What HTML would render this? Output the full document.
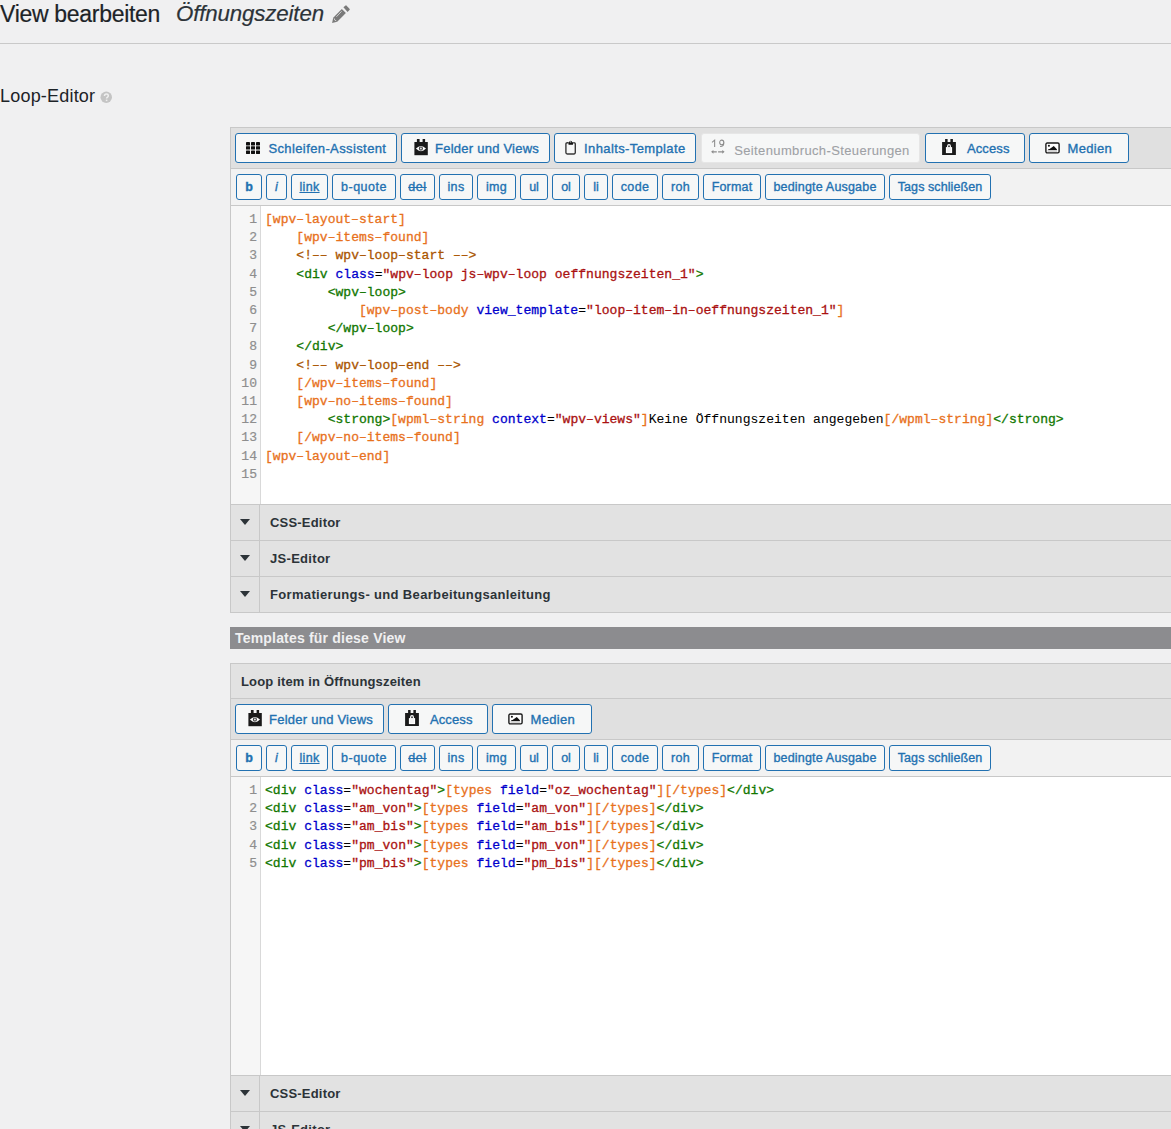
<!DOCTYPE html>
<html><head><meta charset="utf-8">
<style>
*{box-sizing:border-box;margin:0;padding:0}
html,body{width:1171px;height:1129px;overflow:hidden;background:#f0f0f1;font-family:"Liberation Sans",sans-serif;color:#1d2327}
.a{position:absolute}
.t1{left:0;top:0;font-size:23px;line-height:28px;letter-spacing:-0.3px;color:#1d2327;-webkit-text-stroke:0.2px;white-space:nowrap}
.t2{left:176px;top:0px;font-size:22.3px;line-height:28px;font-style:italic;letter-spacing:-0.15px;-webkit-text-stroke:0.2px;color:#2c3338;white-space:nowrap}
.hr{left:0;top:43px;width:1171px;height:1px;background:#c9c9c9}
.le{left:0;top:84px;font-size:18px;line-height:24px;letter-spacing:0.2px;white-space:nowrap}
.help{left:100px;top:92px;width:11px;height:11px;border-radius:50%;background:#c3c4c7;color:#fff;font-size:9px;line-height:11px;text-align:center;font-weight:bold}
.panel{left:230px;width:941px;border-left:1px solid #c8c8c8}
.hl{left:230px;width:941px;height:1px;background:#c8c8c8}
.bg{left:231px;width:940px}
.btn{position:absolute;border:1px solid #2271b1;border-radius:3px;background:#f6f7f7}
.bt1{font-size:13px;line-height:15px;white-space:nowrap;color:#2271b1;-webkit-text-stroke:0.35px}
.bt2{font-size:12.5px;line-height:15px;white-space:nowrap;color:#2271b1;text-align:center;-webkit-text-stroke:0.35px}
.dis{border-color:#e6e6e6}
.gut{left:231px;width:30px;background:#f6f6f6;border-right:1px solid #d9d9d9}
.code{font-family:"Liberation Mono",monospace;font-size:13.05px;line-height:18.2px;white-space:pre;color:#000;-webkit-text-stroke:0.05px}
.ln{left:231px;width:26px;text-align:right;color:#8e8e8e}
.o,.g,.bl,.r,.br{-webkit-text-stroke:0.3px}.ln{-webkit-text-stroke:0.2px}.o{color:#e8711c}.g{color:#170}.bl{color:#00c}.r{color:#a11}.br{color:#a50}
.sec{left:231px;width:940px;height:35px;background:#e2e2e2}
.arr{position:absolute;left:9px;top:14px;width:0;height:0;border-left:5px solid transparent;border-right:5px solid transparent;border-top:6.5px solid #2c3338}
.vsep{position:absolute;left:28px;top:0;width:1px;height:35px;background:#c8c8c8}
.stxt{position:absolute;left:39px;top:0;line-height:35px;font-size:13px;font-weight:bold;color:#2c3338;white-space:nowrap}
</style></head><body>
<div class="a t1">View bearbeiten</div>
<div class="a t2">Öffnungszeiten</div>
<svg class="a" style="left:328px;top:2px" width="26" height="26" viewBox="0 0 26 26"><path d="M15.4 5.3 L17.6 3.5 Q18 3.2 18.4 3.6 L21.7 6.9 Q22 7.3 21.7 7.7 L19.6 9.9Z" fill="#7a7a7a"/><path d="M13.8 6.9 L17.9 11.1 L9.2 19.8 L4.1 20.9 L5.2 15.7Z" fill="#7a7a7a"/><path d="M13.6 9.3 L8.4 14.8" stroke="#d6d6d6" stroke-width="0.9"/><path d="M6.2 16.4 Q6.3 18.6 8.3 18.9" stroke="#e6e6e6" stroke-width="0.8" fill="none"/></svg>
<div class="a hr"></div>
<div class="a le">Loop-Editor</div>
<svg class="a" style="left:100px;top:91px" width="13" height="13" viewBox="0 0 13 13"><circle cx="6.25" cy="6.3" r="5.75" fill="#c4c4c4"/><path d="M4.5 5.0 Q4.5 3.1 6.4 3.1 Q8.3 3.1 8.3 4.8 Q8.3 5.8 7.3 6.4 Q6.6 6.8 6.6 7.6" fill="none" stroke="#efefef" stroke-width="1.5"/><rect x="5.8" y="8.6" width="1.6" height="1.5" fill="#efefef"/></svg>

<!-- PANEL 1 -->
<div class="a panel" style="top:127px;height:486px"></div>
<div class="a hl" style="top:127px"></div>
<div class="a bg" style="top:128px;height:40px;background:#e0e0e0"></div>
<div class="a hl" style="top:168px"></div>
<div class="a bg" style="top:169px;height:36px;background:#f2f2f2"></div>
<div class="a hl" style="top:205px"></div>
<div class="a bg" style="top:206px;height:298px;background:#fff"></div>
<div class="a gut" style="top:206px;height:298px"></div>
<div class="a hl" style="top:504px"></div>

<div class="btn" style="left:235px;top:133px;width:162px;height:30px"></div><svg class="a" style="left:246px;top:142px" width="14" height="12" viewBox="0 0 14 12" fill="#111"><rect x="0" y="0" width="4" height="3.4" rx="0.4"/><rect x="0" y="4.2" width="4" height="3.4" rx="0.4"/><rect x="0" y="8.6" width="4" height="3.4" rx="0.4"/><rect x="5" y="0" width="4" height="3.4" rx="0.4"/><rect x="5" y="4.2" width="4" height="3.4" rx="0.4"/><rect x="5" y="8.6" width="4" height="3.4" rx="0.4"/><rect x="10" y="0" width="4" height="3.4" rx="0.4"/><rect x="10" y="4.2" width="4" height="3.4" rx="0.4"/><rect x="10" y="8.6" width="4" height="3.4" rx="0.4"/></svg><div class="a bt1" style="left:268.4px;top:141px;letter-spacing:0.391px;color:#2271b1">Schleifen-Assistent</div><div class="btn" style="left:401px;top:133px;width:149px;height:30px"></div><svg class="a" style="left:414px;top:139px" width="14" height="17" viewBox="0 0 14 17"><rect x="2.9" y="0" width="2.7" height="4" fill="#1a1a1a"/><rect x="8.6" y="0" width="2.5" height="4" fill="#1a1a1a"/><rect x="0.4" y="3" width="13.4" height="13.2" fill="#1a1a1a"/><path d="M1.9 9.6 Q6.95 4.3 12 9.6 Q6.95 14.9 1.9 9.6Z" fill="#fff"/><circle cx="6.9" cy="9.6" r="1.55" fill="#ddd" stroke="#444" stroke-width="1.1"/></svg><div class="a bt1" style="left:435.1px;top:141px;letter-spacing:0.236px;color:#2271b1">Felder und Views</div><div class="btn" style="left:554px;top:133px;width:142px;height:30px"></div><svg class="a" style="left:564px;top:140px" width="14" height="16" viewBox="0 0 14 16"><path d="M4.2 2.7 H3.3 A1.4 1.4 0 0 0 1.9 4.1 V12.6 A1.4 1.4 0 0 0 3.3 14 H9.9 A1.4 1.4 0 0 0 11.3 12.6 V4.1 A1.4 1.4 0 0 0 9.9 2.7 H9.3" fill="none" stroke="#3a3a3a" stroke-width="1.4"/><path d="M4.2 2.3 H5.2 A1.5 1.5 0 0 1 8.2 2.3 H9.3 L8.9 4.7 H4.6Z" fill="#111"/><circle cx="6.7" cy="1.9" r="0.6" fill="#f6f7f7"/></svg><div class="a bt1" style="left:584.1px;top:141px;letter-spacing:0.382px;color:#2271b1">Inhalts-Template</div><div class="btn dis" style="left:701px;top:133px;width:219px;height:30px"></div><svg class="a" style="left:711px;top:138.5px" width="15" height="17" viewBox="0 0 15 17"><path d="M3.65 7.9 V1.2 L1 3.3" fill="none" stroke="#8c8c8c" stroke-width="1.05"/><ellipse cx="10.75" cy="3.4" rx="2.05" ry="2.3" fill="none" stroke="#8c8c8c" stroke-width="1.05"/><path d="M12.8 3.4 Q12.9 7.6 9.1 7.5" fill="none" stroke="#8c8c8c" stroke-width="1.05"/><path d="M0.1 12.8 L2.4 10.9 V12.2 H5.8 V13.4 H2.4 V14.7Z M13.6 12.8 L11.3 10.9 V12.2 H7.1 V13.4 H11.3 V14.7Z" fill="#8c8c8c"/></svg><div class="a bt1" style="left:734.2px;top:142.5px;letter-spacing:0.371px;color:#9ea1a5;-webkit-text-stroke:0.1px">Seitenumbruch-Steuerungen</div><div class="btn" style="left:925px;top:133px;width:100px;height:30px"></div><svg class="a" style="left:942px;top:139px" width="15" height="17" viewBox="0 0 15 17"><rect x="3.1" y="0" width="2.5" height="4" fill="#1a1a1a"/><rect x="8.4" y="0" width="2.5" height="4" fill="#1a1a1a"/><rect x="0.1" y="3" width="13.8" height="13" fill="#1a1a1a"/><rect x="3.9" y="8.1" width="6.2" height="6" fill="#fff"/><rect x="4.9" y="9.1" width="4.2" height="4" fill="#f2f2f2"/><path d="M5.65 8.4 V7.05 A1.35 1.35 0 0 1 8.35 7.05 V8.4" fill="none" stroke="#fff" stroke-width="1.2"/></svg><div class="a bt1" style="left:966.9px;top:141px;letter-spacing:0.132px;color:#2271b1">Access</div><div class="btn" style="left:1029px;top:133px;width:100px;height:30px"></div><svg class="a" style="left:1043px;top:142px" width="17" height="12" viewBox="0 0 17 12"><rect x="2.9" y="1" width="13.2" height="9.9" rx="1.3" fill="#fff" stroke="#1a1a1a" stroke-width="1.4"/><circle cx="5.9" cy="3.8" r="1.05" fill="#111"/><path d="M4.9 8 Q5.6 6.5 6.6 7.1 L10.8 4.1 L13.9 7.2 V8Z" fill="#111"/><rect x="4.5" y="8.3" width="9.6" height="1.3" fill="#bbb"/></svg><div class="a bt1" style="left:1067.6px;top:141px;letter-spacing:0.310px;color:#2271b1">Medien</div>

<div class="btn" style="left:236px;top:174px;width:26px;height:26px"></div><div class="a bt2" style="left:236px;width:26px;top:179.5px;font-weight:bold;letter-spacing:0.000px">b</div><div class="btn" style="left:266px;top:174px;width:21px;height:26px"></div><div class="a bt2" style="left:266px;width:21px;top:179.5px;font-style:italic;letter-spacing:0.000px">i</div><div class="btn" style="left:291px;top:174px;width:37px;height:26px"></div><div class="a bt2" style="left:291px;width:37px;top:179.5px;text-decoration:underline;letter-spacing:0.359px">link</div><div class="btn" style="left:332px;top:174px;width:64px;height:26px"></div><div class="a bt2" style="left:332px;width:64px;top:179.5px;letter-spacing:0.499px">b-quote</div><div class="btn" style="left:400px;top:174px;width:35px;height:26px"></div><div class="a bt2" style="left:400px;width:35px;top:179.5px;text-decoration:line-through;letter-spacing:0.604px">del</div><div class="btn" style="left:439px;top:174px;width:34px;height:26px"></div><div class="a bt2" style="left:439px;width:34px;top:179.5px;letter-spacing:0.339px">ins</div><div class="btn" style="left:477px;top:174px;width:39px;height:26px"></div><div class="a bt2" style="left:477px;width:39px;top:179.5px;letter-spacing:0.248px">img</div><div class="btn" style="left:520px;top:174px;width:28px;height:26px"></div><div class="a bt2" style="left:520px;width:28px;top:179.5px;letter-spacing:0.000px">ul</div><div class="btn" style="left:552px;top:174px;width:28px;height:26px"></div><div class="a bt2" style="left:552px;width:28px;top:179.5px;letter-spacing:0.000px">ol</div><div class="btn" style="left:584px;top:174px;width:24px;height:26px"></div><div class="a bt2" style="left:584px;width:24px;top:179.5px;letter-spacing:0.000px">li</div><div class="btn" style="left:612px;top:174px;width:46px;height:26px"></div><div class="a bt2" style="left:612px;width:46px;top:179.5px;letter-spacing:0.398px">code</div><div class="btn" style="left:662px;top:174px;width:37px;height:26px"></div><div class="a bt2" style="left:662px;width:37px;top:179.5px;letter-spacing:0.307px">roh</div><div class="btn" style="left:703px;top:174px;width:58px;height:26px"></div><div class="a bt2" style="left:703px;width:58px;top:179.5px;letter-spacing:0.184px">Format</div><div class="btn" style="left:765px;top:174px;width:120px;height:26px"></div><div class="a bt2" style="left:765px;width:120px;top:179.5px;letter-spacing:0.188px">bedingte Ausgabe</div><div class="btn" style="left:889px;top:174px;width:102px;height:26px"></div><div class="a bt2" style="left:889px;width:102px;top:179.5px;letter-spacing:0.080px">Tags schließen</div>

<div class="a code ln" style="top:211px">1
2
3
4
5
6
7
8
9
10
11
12
13
14
15</div>
<div class="a code" style="left:265px;top:211px"><span class="o">[wpv&#8211;layout&#8211;start]</span>
    <span class="o">[wpv&#8211;items&#8211;found]</span>
    <span class="br">&lt;!&#8211;&#8211; wpv&#8211;loop&#8211;start &#8211;&#8211;&gt;</span>
    <span class="g">&lt;div</span> <span class="bl">class</span>=<span class="r">"wpv&#8211;loop js&#8211;wpv&#8211;loop oeffnungszeiten_1"</span><span class="g">&gt;</span>
        <span class="g">&lt;wpv&#8211;loop&gt;</span>
            <span class="o">[wpv&#8211;post&#8211;body</span> <span class="bl">view_template</span>=<span class="r">"loop&#8211;item&#8211;in&#8211;oeffnungszeiten_1"</span><span class="o">]</span>
        <span class="g">&lt;/wpv&#8211;loop&gt;</span>
    <span class="g">&lt;/div&gt;</span>
    <span class="br">&lt;!&#8211;&#8211; wpv&#8211;loop&#8211;end &#8211;&#8211;&gt;</span>
    <span class="o">[/wpv&#8211;items&#8211;found]</span>
    <span class="o">[wpv&#8211;no&#8211;items&#8211;found]</span>
        <span class="g">&lt;strong&gt;</span><span class="o">[wpml&#8211;string</span> <span class="bl">context</span>=<span class="r">"wpv&#8211;views"</span><span class="o">]</span>Keine Öffnungszeiten angegeben<span class="o">[/wpml&#8211;string]</span><span class="g">&lt;/strong&gt;</span>
    <span class="o">[/wpv&#8211;no&#8211;items&#8211;found]</span>
<span class="o">[wpv&#8211;layout&#8211;end]</span>
</div>

<div class="a sec" style="top:505px"><div class="arr"></div><div class="vsep"></div><div class="stxt" style="letter-spacing:0.2px">CSS-Editor</div></div>
<div class="a hl" style="top:540px"></div>
<div class="a sec" style="top:541px"><div class="arr"></div><div class="vsep"></div><div class="stxt" style="letter-spacing:0.3px">JS-Editor</div></div>
<div class="a hl" style="top:576px"></div>
<div class="a sec" style="top:577px"><div class="arr"></div><div class="vsep"></div><div class="stxt" style="letter-spacing:0.34px">Formatierungs- und Bearbeitungsanleitung</div></div>
<div class="a hl" style="top:612px"></div>

<!-- TEMPLATES BAR -->
<div class="a" style="left:230px;top:627px;width:941px;height:22px;background:#8c8c8f;color:#f0f0f1;font-weight:bold;font-size:14px;line-height:22px;padding-left:5px;letter-spacing:0.19px;white-space:nowrap">Templates für diese View</div>

<!-- PANEL 2 -->
<div class="a panel" style="top:663px;height:466px"></div>
<div class="a hl" style="top:663px"></div>
<div class="a bg" style="top:664px;height:34px;background:#e2e2e2"></div>
<div class="a" style="left:241px;top:665px;line-height:34px;font-size:13px;font-weight:bold;color:#2c3338;letter-spacing:0.16px;white-space:nowrap">Loop item in Öffnungszeiten</div>
<div class="a hl" style="top:698px"></div>
<div class="a bg" style="top:699px;height:40px;background:#e0e0e0"></div>
<div class="a hl" style="top:739px"></div>
<div class="a bg" style="top:740px;height:36px;background:#f2f2f2"></div>
<div class="a hl" style="top:776px"></div>
<div class="a bg" style="top:777px;height:298px;background:#fff"></div>
<div class="a gut" style="top:777px;height:298px"></div>
<div class="a hl" style="top:1075px"></div>

<div class="btn" style="left:235px;top:704px;width:149px;height:30px"></div><svg class="a" style="left:248px;top:710px" width="14" height="17" viewBox="0 0 14 17"><rect x="2.9" y="0" width="2.7" height="4" fill="#1a1a1a"/><rect x="8.6" y="0" width="2.5" height="4" fill="#1a1a1a"/><rect x="0.4" y="3" width="13.4" height="13.2" fill="#1a1a1a"/><path d="M1.9 9.6 Q6.95 4.3 12 9.6 Q6.95 14.9 1.9 9.6Z" fill="#fff"/><circle cx="6.9" cy="9.6" r="1.55" fill="#ddd" stroke="#444" stroke-width="1.1"/></svg><div class="a bt1" style="left:269.1px;top:712px;letter-spacing:0.236px;color:#2271b1">Felder und Views</div><div class="btn" style="left:388px;top:704px;width:100px;height:30px"></div><svg class="a" style="left:405px;top:710px" width="15" height="17" viewBox="0 0 15 17"><rect x="3.1" y="0" width="2.5" height="4" fill="#1a1a1a"/><rect x="8.4" y="0" width="2.5" height="4" fill="#1a1a1a"/><rect x="0.1" y="3" width="13.8" height="13" fill="#1a1a1a"/><rect x="3.9" y="8.1" width="6.2" height="6" fill="#fff"/><rect x="4.9" y="9.1" width="4.2" height="4" fill="#f2f2f2"/><path d="M5.65 8.4 V7.05 A1.35 1.35 0 0 1 8.35 7.05 V8.4" fill="none" stroke="#fff" stroke-width="1.2"/></svg><div class="a bt1" style="left:429.9px;top:712px;letter-spacing:0.132px;color:#2271b1">Access</div><div class="btn" style="left:492px;top:704px;width:100px;height:30px"></div><svg class="a" style="left:506px;top:713px" width="17" height="12" viewBox="0 0 17 12"><rect x="2.9" y="1" width="13.2" height="9.9" rx="1.3" fill="#fff" stroke="#1a1a1a" stroke-width="1.4"/><circle cx="5.9" cy="3.8" r="1.05" fill="#111"/><path d="M4.9 8 Q5.6 6.5 6.6 7.1 L10.8 4.1 L13.9 7.2 V8Z" fill="#111"/><rect x="4.5" y="8.3" width="9.6" height="1.3" fill="#bbb"/></svg><div class="a bt1" style="left:530.6px;top:712px;letter-spacing:0.310px;color:#2271b1">Medien</div>

<div class="btn" style="left:236px;top:745px;width:26px;height:26px"></div><div class="a bt2" style="left:236px;width:26px;top:750.5px;font-weight:bold;letter-spacing:0.000px">b</div><div class="btn" style="left:266px;top:745px;width:21px;height:26px"></div><div class="a bt2" style="left:266px;width:21px;top:750.5px;font-style:italic;letter-spacing:0.000px">i</div><div class="btn" style="left:291px;top:745px;width:37px;height:26px"></div><div class="a bt2" style="left:291px;width:37px;top:750.5px;text-decoration:underline;letter-spacing:0.359px">link</div><div class="btn" style="left:332px;top:745px;width:64px;height:26px"></div><div class="a bt2" style="left:332px;width:64px;top:750.5px;letter-spacing:0.499px">b-quote</div><div class="btn" style="left:400px;top:745px;width:35px;height:26px"></div><div class="a bt2" style="left:400px;width:35px;top:750.5px;text-decoration:line-through;letter-spacing:0.604px">del</div><div class="btn" style="left:439px;top:745px;width:34px;height:26px"></div><div class="a bt2" style="left:439px;width:34px;top:750.5px;letter-spacing:0.339px">ins</div><div class="btn" style="left:477px;top:745px;width:39px;height:26px"></div><div class="a bt2" style="left:477px;width:39px;top:750.5px;letter-spacing:0.248px">img</div><div class="btn" style="left:520px;top:745px;width:28px;height:26px"></div><div class="a bt2" style="left:520px;width:28px;top:750.5px;letter-spacing:0.000px">ul</div><div class="btn" style="left:552px;top:745px;width:28px;height:26px"></div><div class="a bt2" style="left:552px;width:28px;top:750.5px;letter-spacing:0.000px">ol</div><div class="btn" style="left:584px;top:745px;width:24px;height:26px"></div><div class="a bt2" style="left:584px;width:24px;top:750.5px;letter-spacing:0.000px">li</div><div class="btn" style="left:612px;top:745px;width:46px;height:26px"></div><div class="a bt2" style="left:612px;width:46px;top:750.5px;letter-spacing:0.398px">code</div><div class="btn" style="left:662px;top:745px;width:37px;height:26px"></div><div class="a bt2" style="left:662px;width:37px;top:750.5px;letter-spacing:0.307px">roh</div><div class="btn" style="left:703px;top:745px;width:58px;height:26px"></div><div class="a bt2" style="left:703px;width:58px;top:750.5px;letter-spacing:0.184px">Format</div><div class="btn" style="left:765px;top:745px;width:120px;height:26px"></div><div class="a bt2" style="left:765px;width:120px;top:750.5px;letter-spacing:0.188px">bedingte Ausgabe</div><div class="btn" style="left:889px;top:745px;width:102px;height:26px"></div><div class="a bt2" style="left:889px;width:102px;top:750.5px;letter-spacing:0.080px">Tags schließen</div>

<div class="a code ln" style="top:782px">1
2
3
4
5</div>
<div class="a code" style="left:265px;top:782px"><span class="g">&lt;div</span> <span class="bl">class</span>=<span class="r">"wochentag"</span><span class="g">&gt;</span><span class="o">[types</span> <span class="bl">field</span>=<span class="r">"oz_wochentag"</span><span class="o">]</span><span class="o">[/types]</span><span class="g">&lt;/div&gt;</span>
<span class="g">&lt;div</span> <span class="bl">class</span>=<span class="r">"am_von"</span><span class="g">&gt;</span><span class="o">[types</span> <span class="bl">field</span>=<span class="r">"am_von"</span><span class="o">]</span><span class="o">[/types]</span><span class="g">&lt;/div&gt;</span>
<span class="g">&lt;div</span> <span class="bl">class</span>=<span class="r">"am_bis"</span><span class="g">&gt;</span><span class="o">[types</span> <span class="bl">field</span>=<span class="r">"am_bis"</span><span class="o">]</span><span class="o">[/types]</span><span class="g">&lt;/div&gt;</span>
<span class="g">&lt;div</span> <span class="bl">class</span>=<span class="r">"pm_von"</span><span class="g">&gt;</span><span class="o">[types</span> <span class="bl">field</span>=<span class="r">"pm_von"</span><span class="o">]</span><span class="o">[/types]</span><span class="g">&lt;/div&gt;</span>
<span class="g">&lt;div</span> <span class="bl">class</span>=<span class="r">"pm_bis"</span><span class="g">&gt;</span><span class="o">[types</span> <span class="bl">field</span>=<span class="r">"pm_bis"</span><span class="o">]</span><span class="o">[/types]</span><span class="g">&lt;/div&gt;</span></div>

<div class="a sec" style="top:1076px"><div class="arr"></div><div class="vsep"></div><div class="stxt" style="letter-spacing:0.2px">CSS-Editor</div></div>
<div class="a hl" style="top:1111px"></div>
<div class="a sec" style="top:1112px"><div class="arr"></div><div class="vsep"></div><div class="stxt" style="letter-spacing:0.3px">JS-Editor</div></div>
</body></html>
